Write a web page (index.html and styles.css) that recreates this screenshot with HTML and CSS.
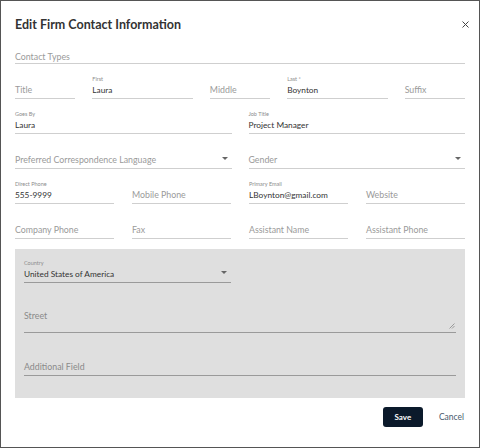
FILE: index.html
```html
<!DOCTYPE html>
<html>
<head>
<meta charset="utf-8">
<link rel="stylesheet" href="styles.css">
</head>
<body>
<div class="dialog">
  <div class="header">
    <h1 class="title">Edit Firm Contact Information</h1>
    <svg class="close" width="7" height="7" viewBox="0 0 7 7"><path d="M0.5 0.5 L6.5 6.5 M6.5 0.5 L0.5 6.5" stroke="#444" stroke-width="1" fill="none"/></svg>
  </div>

  <div class="row row-1">
    <div class="field tight"><div class="value ph">Contact Types</div></div>
  </div>

  <div class="row row-name">
    <div class="field"><div class="value ph">Title</div></div>
    <div class="field"><div class="label">First</div><div class="value">Laura</div></div>
    <div class="field"><div class="value ph">Middle</div></div>
    <div class="field"><div class="label">Last *</div><div class="value">Boynton</div></div>
    <div class="field"><div class="value ph">Suffix</div></div>
  </div>

  <div class="row row-2">
    <div class="field"><div class="label">Goes By</div><div class="value">Laura</div></div>
    <div class="field"><div class="label">Job Title</div><div class="value">Project Manager</div></div>
  </div>

  <div class="row row-2">
    <div class="field select"><div class="value ph">Preferred Correspondence Language</div><span class="caret"></span></div>
    <div class="field select"><div class="value ph">Gender</div><span class="caret"></span></div>
  </div>

  <div class="row row-4">
    <div class="field"><div class="label">Direct Phone</div><div class="value">555-9999</div></div>
    <div class="field"><div class="value ph">Mobile Phone</div></div>
    <div class="field"><div class="label">Primary Email</div><div class="value">LBoynton@gmail.com</div></div>
    <div class="field"><div class="value ph">Website</div></div>
  </div>

  <div class="row row-4">
    <div class="field"><div class="value ph">Company Phone</div></div>
    <div class="field"><div class="value ph">Fax</div></div>
    <div class="field"><div class="value ph">Assistant Name</div></div>
    <div class="field"><div class="value ph">Assistant Phone</div></div>
  </div>

  <div class="address">
    <div class="row-2 country-row">
      <div class="field select dark"><div class="label">Country</div><div class="value">United States of America</div><span class="caret"></span></div>
    </div>
    <div class="field dark street">
      <div class="value ph">Street</div>
      <svg class="grip" width="6" height="6" viewBox="0 0 6 6"><path d="M5.5 0.5 L0.5 5.5 M5.5 3 L3 5.5" stroke="#888" stroke-width="0.8" fill="none"/></svg>
    </div>
    <div class="field dark additional"><div class="value ph">Additional Field</div></div>
  </div>

  <div class="actions">
    <button class="btn-save">Save</button>
    <button class="btn-cancel">Cancel</button>
  </div>
</div>
</body>
</html>
```
FILE: styles.css
```css
* { box-sizing: border-box; }
html, body { margin: 0; padding: 0; background: #fff; }
body { font-family: Lato, "Open Sans", sans-serif; color: #333; }

.dialog {
  width: 480px;
  height: 448px;
  border: 1px solid #555;
  padding: 0 14px;
  display: flex;
  flex-direction: column;
}

.header {
  height: 46px;
  display: flex;
  align-items: center;
  justify-content: space-between;
}
.title {
  margin: 0;
  font-size: 12.5px;
  font-weight: 700;
  color: #333;
}
.close {
  display: block;
  margin-right: -4px;
}

.row {
  display: grid;
  height: 35px;
  align-items: end;
}
.row-1 { height: 17px; grid-template-columns: 1fr; }
.row-name { grid-template-columns: 3fr 5fr 3fr 5fr 3fr; column-gap: 17px; }
.row-2 { display: grid; grid-template-columns: 1fr 1fr; column-gap: 17px; align-items: end; }
.row-4 { grid-template-columns: repeat(4, 1fr); column-gap: 18px; }

.field {
  position: relative;
  border-bottom: 1px solid #cfcfcf;
}
.label {
  font-size: 5.5px;
  line-height: 8px;
  height: 8px;
  color: #8c8c8c;
}
.value {
  font-size: 8.3px;
  line-height: 14px;
  padding-bottom: 1px;
  color: #333;
  white-space: nowrap;
}
.field.tight .value { line-height: 12px; padding-bottom: 0; }
.value.ph { color: #9a9a9a; font-size: 8.8px; }

.caret {
  position: absolute;
  right: 4px;
  bottom: 8px;
  width: 0;
  height: 0;
  border-left: 3px solid transparent;
  border-right: 3px solid transparent;
  border-top: 3px solid #666;
}

.address {
  margin-top: 10px;
  background: #dfdfdf;
  height: 149px;
  padding: 10px 9px 0;
  display: flex;
  flex-direction: column;
}
.field.dark { border-bottom-color: #9a9a9a; }
.field.dark .value.ph { color: #8a8a8a; }
.country-row { column-gap: 18px; }
.street {
  margin-top: 26px;
  height: 24px;
}
.grip {
  position: absolute;
  right: 1px;
  bottom: 3px;
}
.additional { margin-top: 27px; }

.actions {
  display: flex;
  justify-content: flex-end;
  align-items: center;
  margin-top: 9px;
  gap: 16px;
}
.btn-save {
  width: 40px;
  height: 20px;
  border: none;
  border-radius: 3px;
  background: #0b1a2b;
  color: #fff;
  font-family: Lato, sans-serif;
  font-weight: 700;
  font-size: 8px;
  padding: 0;
}
.btn-cancel {
  border: none;
  background: none;
  padding: 0;
  margin-right: 1px;
  font-family: Lato, sans-serif;
  font-size: 8.5px;
  color: #4b5a6e;
}
```
